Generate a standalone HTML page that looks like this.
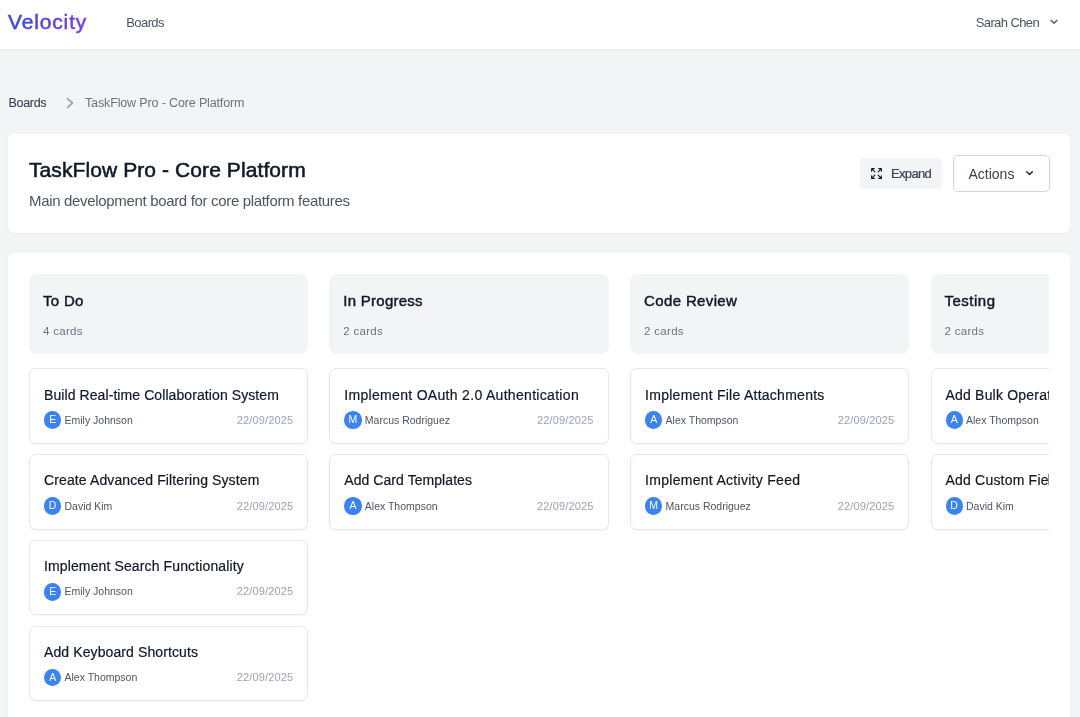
<!DOCTYPE html>
<html><head><meta charset="utf-8">
<style>
*{margin:0;padding:0;box-sizing:border-box}
html,body{width:1080px;height:717px;overflow:hidden;background:#f3f4f6;font-family:"Liberation Sans",sans-serif;color:#111827}
#root{position:absolute;left:0;top:0;width:1080px;height:717px;will-change:transform}
.a{position:absolute;white-space:nowrap;line-height:1}
#hdr{position:absolute;left:0;top:0;width:1080px;height:49px;background:#fff;box-shadow:0 1px 2px rgba(0,0,0,.06)}
#logo{left:8px;top:10.5px;font-size:22px;letter-spacing:0.3px;background:linear-gradient(90deg,#3a3ee8,#7c3aed);-webkit-background-clip:text;background-clip:text;color:transparent;-webkit-text-stroke:0.45px transparent}
#nav{left:126.3px;top:16px;font-size:13px;letter-spacing:-0.6px;color:#4b5563}
#user{left:975.7px;top:15.5px;font-size:13px;letter-spacing:-0.6px;color:#4b5563}
#bc1{left:8.5px;top:97px;font-size:12.5px;letter-spacing:-0.3px;color:#374151;-webkit-text-stroke:0.1px #374151}
#bc2{left:85px;top:97px;font-size:12.5px;letter-spacing:-0.14px;color:#6b7280}
.card{position:absolute;background:#fff;border-radius:6px;box-shadow:0 1px 2px rgba(0,0,0,.05)}
#hcard{left:8px;top:134px;width:1062px;height:99px}
#title{left:29px;top:158.7px;font-size:21px;letter-spacing:0.09px;color:#111827;-webkit-text-stroke:0.55px #111827}
#desc{left:29px;top:193px;font-size:15px;letter-spacing:-0.33px;color:#4b5563}
#expand{position:absolute;left:860px;top:158px;width:82px;height:31px;background:#f3f4f6;border-radius:4px}
#expand span{position:absolute;left:31px;top:9px;font-size:13px;letter-spacing:-0.65px;color:#374151;line-height:1;-webkit-text-stroke:0.2px #374151}
#actions{position:absolute;left:952.5px;top:155.3px;width:97px;height:36.5px;border:1px solid #d1d5db;border-radius:5px;background:#fff}
#actions span{position:absolute;left:15px;top:11.2px;font-size:14px;color:#374151;line-height:1}
#board{left:8px;top:253px;width:1062px;height:480px}
#clip{position:absolute;left:0;top:0;width:1049px;height:717px;overflow:hidden}
.col{position:absolute;top:274.3px;width:279.3px}
.colh{position:absolute;left:0;top:0;width:279.3px;height:80px;background:#f3f4f6;border-radius:8px}
.colh .t{position:absolute;left:14px;top:18.8px;font-size:15px;color:#111827;line-height:1;-webkit-text-stroke:0.45px #111827}
.colh .c{position:absolute;left:14px;top:51.5px;font-size:11.5px;letter-spacing:0.3px;color:#6b7280;line-height:1}
.tc{position:absolute;left:0;width:279.3px;height:75.3px;background:#fff;border:1px solid #e5e7eb;border-radius:7px;box-shadow:0 1px 2px rgba(0,0,0,.04)}
.tc .t{position:absolute;left:14px;top:18.2px;font-size:14px;letter-spacing:0.15px;color:#111827;line-height:1;-webkit-text-stroke:0.2px #111827}
.tc .av{position:absolute;left:14px;top:42.1px;width:17.3px;height:17.3px;border-radius:50%;background:#3b82f6;color:#fff;font-size:10.5px;line-height:17.3px;text-align:center}
.tc .n{position:absolute;left:34.5px;top:45.3px;font-size:10.5px;color:#4b5563;line-height:1}
.tc .d{position:absolute;right:14px;top:45.3px;font-size:11px;letter-spacing:0.15px;color:#9ca3af;line-height:1}
</style></head>
<body><div id="root">
<div id="hdr"></div>
<svg style="position:absolute;left:0;top:0" width="120" height="49"><defs><linearGradient id="lg" gradientUnits="userSpaceOnUse" x1="8" y1="0" x2="87" y2="0"><stop offset="0" stop-color="#3546ea"/><stop offset="1" stop-color="#7d3aed"/></linearGradient></defs><text x="8" y="28.9" font-family="Liberation Sans" font-size="21" letter-spacing="0.85" fill="url(#lg)" stroke="url(#lg)" stroke-width="0.5">Velocity</text></svg>
<div id="nav" class="a">Boards</div>
<div id="user" class="a">Sarah Chen</div>
<svg style="position:absolute;left:1050px;top:19px" width="8" height="6" viewBox="0 0 8 6"><path d="M1 1.2 L4 4.2 L7 1.2" fill="none" stroke="#4b5563" stroke-width="1.3" stroke-linecap="round" stroke-linejoin="round"/></svg>

<div id="bc1" class="a">Boards</div>
<svg style="position:absolute;left:65px;top:97px" width="10" height="12" viewBox="0 0 10 12"><path d="M2.6 1.6 L7.4 6 L2.6 10.4" fill="none" stroke="#9ca3af" stroke-width="1.8" stroke-linecap="round" stroke-linejoin="round"/></svg>
<div id="bc2" class="a">TaskFlow Pro - Core Platform</div>

<div id="hcard" class="card"></div>
<div id="title" class="a">TaskFlow Pro - Core Platform</div>
<div id="desc" class="a">Main development board for core platform features</div>
<div id="expand">
<svg style="position:absolute;left:10.2px;top:9.1px" width="13" height="13" viewBox="0 0 24 24"><g fill="none" stroke="#111827" stroke-width="2.1" stroke-linecap="round" stroke-linejoin="round"><path d="m21 21-6-6m6 6v-4.8m0 4.8h-4.8"/><path d="M3 16.2V21m0 0h4.8M3 21l6-6"/><path d="M21 7.8V3m0 0h-4.8M21 3l-6 6"/><path d="M3 7.8V3m0 0h4.8M3 3l6 6"/></g></svg>
<span>Expand</span></div>
<div id="actions"><span>Actions</span>
<svg style="position:absolute;left:72.4px;top:14.9px" width="8" height="5" viewBox="0 0 8 5"><path d="M0.8 0.8 L3.55 3.55 L6.3 0.8" fill="none" stroke="#1f2937" stroke-width="1.4" stroke-linecap="round" stroke-linejoin="round"/></svg>
</div>

<div id="board" class="card"></div>
<div id="clip">
<div class="col" style="left:29.0px"><div class="colh"><div class="t" style="letter-spacing:0.3px">To Do</div><div class="c">4 cards</div></div>
<div class="tc" style="top:94.1px"><div class="t" style="letter-spacing:0.084px">Build Real-time Collaboration System</div><div class="av">E</div><div class="n">Emily Johnson</div><div class="d">22/09/2025</div></div>
<div class="tc" style="top:180.0px"><div class="t" style="letter-spacing:0.118px">Create Advanced Filtering System</div><div class="av">D</div><div class="n">David Kim</div><div class="d">22/09/2025</div></div>
<div class="tc" style="top:265.9px"><div class="t" style="letter-spacing:0.124px">Implement Search Functionality</div><div class="av">E</div><div class="n">Emily Johnson</div><div class="d">22/09/2025</div></div>
<div class="tc" style="top:351.8px"><div class="t" style="letter-spacing:0.102px">Add Keyboard Shortcuts</div><div class="av">A</div><div class="n">Alex Thompson</div><div class="d">22/09/2025</div></div>
</div>
<div class="col" style="left:329.3px"><div class="colh"><div class="t" style="letter-spacing:0.26px">In Progress</div><div class="c">2 cards</div></div>
<div class="tc" style="top:94.1px"><div class="t" style="letter-spacing:0.31px">Implement OAuth 2.0 Authentication</div><div class="av">M</div><div class="n">Marcus Rodriguez</div><div class="d">22/09/2025</div></div>
<div class="tc" style="top:180.0px"><div class="t" style="letter-spacing:0.062px">Add Card Templates</div><div class="av">A</div><div class="n">Alex Thompson</div><div class="d">22/09/2025</div></div>
</div>
<div class="col" style="left:630.1px"><div class="colh"><div class="t" style="letter-spacing:0.36px">Code Review</div><div class="c">2 cards</div></div>
<div class="tc" style="top:94.1px"><div class="t" style="letter-spacing:0.26px">Implement File Attachments</div><div class="av">A</div><div class="n">Alex Thompson</div><div class="d">22/09/2025</div></div>
<div class="tc" style="top:180.0px"><div class="t" style="letter-spacing:0.286px">Implement Activity Feed</div><div class="av">M</div><div class="n">Marcus Rodriguez</div><div class="d">22/09/2025</div></div>
</div>
<div class="col" style="left:930.5px"><div class="colh"><div class="t" style="letter-spacing:0.5px">Testing</div><div class="c">2 cards</div></div>
<div class="tc" style="top:94.1px"><div class="t" style="letter-spacing:0.2px">Add Bulk Operations</div><div class="av">A</div><div class="n">Alex Thompson</div><div class="d">22/09/2025</div></div>
<div class="tc" style="top:180.0px"><div class="t" style="letter-spacing:0.2px">Add Custom Fi<span style="letter-spacing:-0.8px">e</span>lds</div><div class="av">D</div><div class="n">David Kim</div><div class="d">22/09/2025</div></div>
</div>
</div>
</div></body></html>
